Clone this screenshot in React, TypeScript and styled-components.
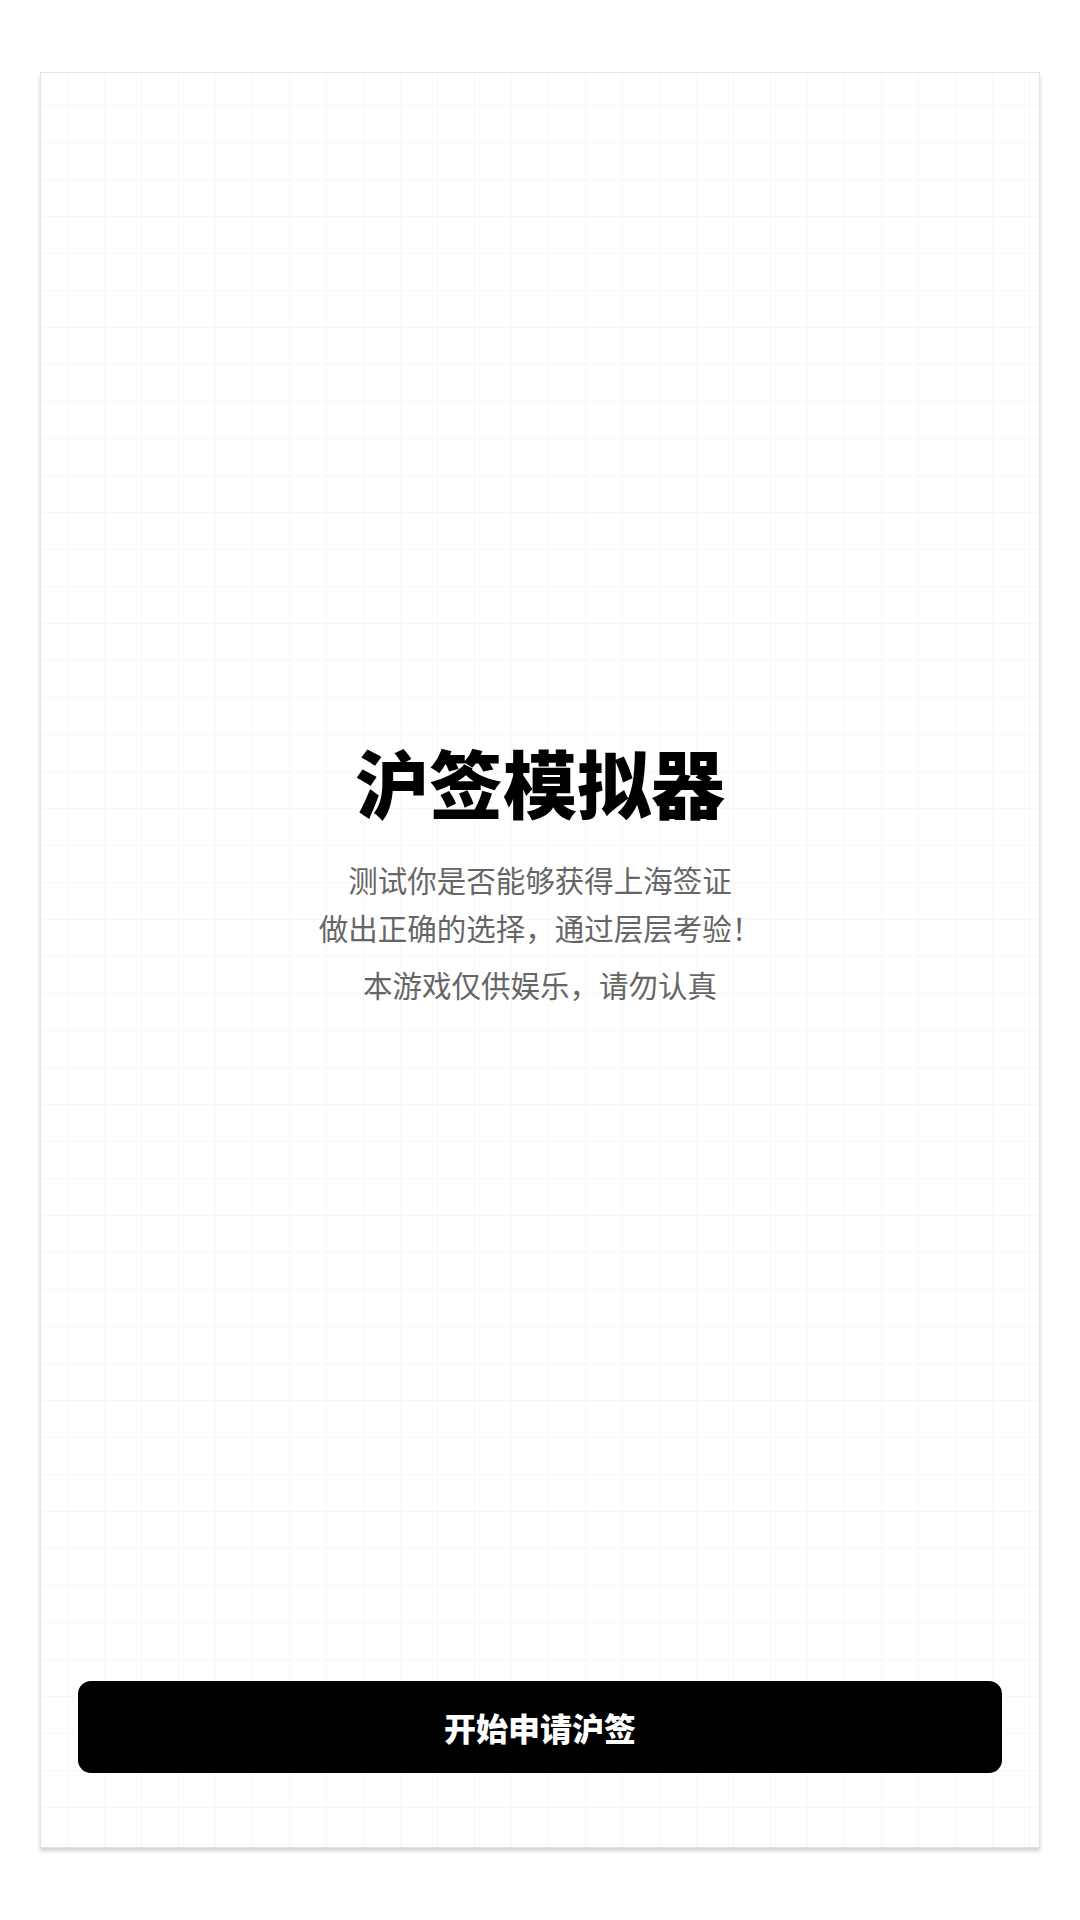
import React from 'react';
import styled, { createGlobalStyle } from 'styled-components';

const GlobalStyle = createGlobalStyle`
	html, body {
		margin: 0;
		padding: 0;
		background: #ffffff;
	}
	body {
		font-family: 'Noto Sans CJK SC', 'Noto Sans', sans-serif;
	}
`;

const Page = styled.div`
	box-sizing: border-box;
	height: 1920px;
	padding: 72px 40px 0;
`;

const Card = styled.div`
	background-color: #ffffff;
	background-image: linear-gradient(rgba(0, 0, 0, 0.028) 1px, transparent 1px),
		linear-gradient(90deg, rgba(0, 0, 0, 0.028) 1px, transparent 1px);
	background-position: 0 -5px, 26px 0;
	background-size: 37px 37px, 37px 37px;
	border: 1px solid #e4e4e4;
	box-shadow: 0 3px 4px rgba(0, 0, 0, 0.18);
	box-sizing: border-box;
	display: flex;
	flex-direction: column;
	height: 1776px;
	padding: 0 37px 74px;
	width: 1000px;
`;

const Intro = styled.div`
	align-items: center;
	display: flex;
	flex: 1;
	flex-direction: column;
	justify-content: center;
	padding-bottom: 8px;
`;

const Title = styled.h1`
	color: #000000;
	font-size: 74px;
	font-weight: 900;
	line-height: 86px;
	margin: 0 0 31px;
`;

const Line = styled.p<{ gapTop?: number }>`
	color: #666666;
	font-size: 29.5px;
	font-weight: 400;
	line-height: 48px;
	margin: ${(props) => props.gapTop || 0}px 0 0;
	text-align: center;
`;

const StartButton = styled.button`
	background: #000000;
	border: none;
	border-radius: 13px;
	color: #ffffff;
	cursor: pointer;
	font-family: 'Noto Sans CJK SC', sans-serif;
	font-size: 32px;
	font-weight: 900;
	height: 92px;
	width: 100%;
`;

export default function App() {
	return (
		<>
			<GlobalStyle />
			<Page>
				<Card>
					<Intro>
						<Title>沪签模拟器</Title>
						<Line>测试你是否能够获得上海签证</Line>
						<Line>做出正确的选择，通过层层考验！</Line>
						<Line gapTop={9}>本游戏仅供娱乐，请勿认真</Line>
					</Intro>
					<StartButton>开始申请沪签</StartButton>
				</Card>
			</Page>
		</>
	);
}
